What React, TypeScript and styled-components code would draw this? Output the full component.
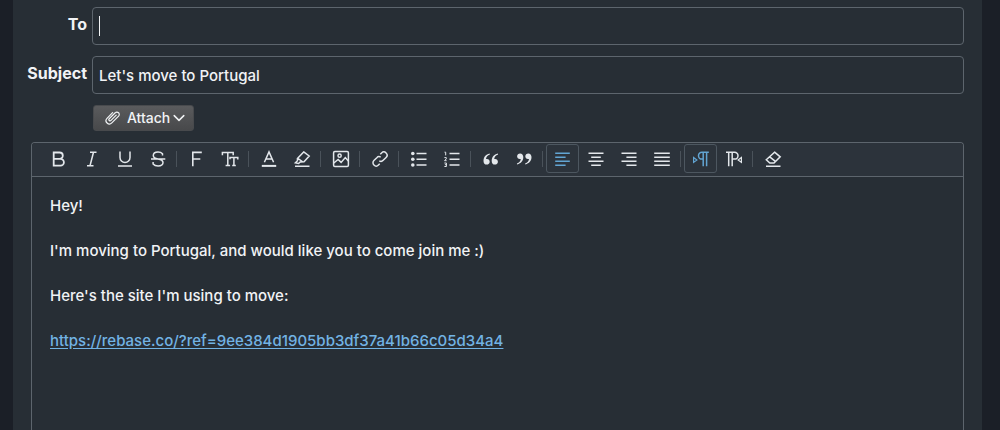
import React from "react";
import styled, { createGlobalStyle } from "styled-components";

const Global = createGlobalStyle`
  * { box-sizing: border-box; }
  html, body, #root { height: 100%; }
  body {
    margin: 0;
    background: #1b1f27;
    font-family: Inter, "Liberation Sans", sans-serif;
    font-size: 15px;
    font-weight: 500;
    color: #f1f3f5;
    overflow: hidden;
  }
`;

const Panel = styled.form`
  display: flex;
  flex-direction: column;
  min-height: 100%;
  margin: 0 18px 0 13px;
  padding: 7px 18px 0 14px;
  background: #272e35;
`;

const Row = styled.div`
  display: grid;
  grid-template-columns: 60px 1fr;
  column-gap: 5px;
  margin-bottom: 11px;
`;

const Label = styled.label`
  justify-self: end;
  padding-top: 8px;
  font-size: 16px;
  line-height: 18px;
  font-weight: 700;
`;

const Field = styled.div`
  display: flex;
  align-items: center;
  height: 38px;
  padding: 0 6px;
  border: 1px solid #5d656d;
  border-radius: 4px;
`;

const Caret = styled.span`
  width: 1px;
  height: 20px;
  background: #f1f3f5;
`;

const Input = styled.input`
  flex: 1;
  min-width: 0;
  padding: 0;
  border: 0;
  outline: 0;
  background: transparent;
  color: inherit;
  font: inherit;
  caret-color: transparent;
`;

const AttachButton = styled.button`
  display: flex;
  align-items: center;
  align-self: flex-start;
  height: 26px;
  margin: 0 0 11px 66px;
  padding: 0 8px 0 11px;
  border: 1px solid #484a4d;
  border-radius: 3px;
  background: linear-gradient(#5a5b5d, #48494b);
  color: #f1f3f5;
  font: 500 14px/18px Inter, "Liberation Sans", sans-serif;

  span { margin: 0 3px 0 6px; }
`;

const Editor = styled.section`
  flex: 1;
  margin-left: 4px;
  border: 1px solid #5d656d;
  border-bottom: 0;
  border-radius: 4px 4px 0 0;
`;

const Toolbar = styled.div`
  display: flex;
  align-items: center;
  height: 34px;
  padding: 0 0 2px 10px;
  border-bottom: 1px solid #5d656d;
  border-radius: 3px 3px 0 0;
  background: #2c333b;
`;

const Tool = styled.button<{ $active?: boolean }>`
  display: flex;
  align-items: center;
  justify-content: center;
  flex: none;
  width: 33px;
  height: 29px;
  padding: 0;
  border: 1px solid ${(p) => (p.$active ? "#4d5760" : "transparent")};
  border-radius: 3px;
  background: transparent;
  color: ${(p) => (p.$active ? "#62a5d3" : "#e3e7eb")};
`;

const Divider = styled.span`
  flex: none;
  width: 1px;
  height: 16px;
  margin: 0 3px 0 2px;
  background: #4a525a;
`;

const Body = styled.div`
  padding: 17px 18px;
  outline: 0;
`;

const Paragraph = styled.p`
  margin: 0 0 22px;
  line-height: 23px;
`;

const Link = styled.a`
  color: #72b3e4;
  text-underline-offset: 2px;
`;

const Glyph = styled.svg`
  display: block;
  width: 18px;
  height: 18px;
  fill: none;
  stroke: currentColor;
  stroke-width: 1.5;
`;

const solid = { fill: "currentColor", stroke: "none" };

const quoteMark = (
  <path
    {...solid}
    d="M7.6 3.6C3.8 4.4 1.5 7 1.5 10.9c0 2.3 1.3 3.7 3.2 3.7 1.7 0 3-1.2 3-2.9 0-1.6-1.1-2.8-2.7-2.8-.4 0-.8.1-1 .2.3-2.1 1.5-3.7 3.9-4.5zM15.8 3.6C12 4.4 9.7 7 9.7 10.9c0 2.3 1.3 3.7 3.2 3.7 1.7 0 3-1.2 3-2.9 0-1.6-1.1-2.8-2.7-2.8-.4 0-.8.1-1 .2.3-2.1 1.5-3.7 3.9-4.5z"
  />
);

const icons: Record<string, React.ReactNode> = {
  Bold: <path strokeWidth="1.8" d="M3.7 2.5h5.9a3.2 3.2 0 0 1 0 6.4H3.7zM3.7 8.9h6.8a3.4 3.4 0 0 1 0 6.8H3.7z" />,
  Italic: <path d="M7 2.2h6.5M4 15.8h6.5M10.5 2.2 7 15.8" />,
  Underline: <path d="M4 1.5v6a5 5 0 0 0 10 0v-6M2 15.9h14" />,
  Strikethrough: <path d="M13.5 5.5V3.7C12.6 2.7 11 2 9 2 6.2 2 4.3 3.4 4.3 5.5c0 1.8 1.2 2.8 4.7 3.5 3.6.7 5 1.6 5 3.5 0 2-1.9 3.4-4.9 3.4-2.2 0-4-.8-5-2v-2M2 9.1h14.3" />,
  Font: <path strokeWidth="1.6" d="M4.8 16.3V2.4h9M4.8 9h7.5" />,
  "Font size": <path d="M1.4 5.2V2.4h10.8v2.8M6.8 2.4v13M4.6 15.5h4.5M9 9.2V7.4h7.8v2.2M12.9 7.4v8.1M11.2 15.5h3.6" />,
  "Text color": (
    <>
      <path d="M4.4 12.3 9 1.9l4.6 10.4M6 9h6" />
      <path strokeWidth="2" d="M1.8 15.9h14.4" />
    </>
  ),
  Highlight: <path d="M10.7 1.9 16.2 6 11 11.8 7.2 12 5.6 13.5 2.4 12.8 4.5 10.8 4.4 8.6zM4.8 8.4 10 12M2 16.2h14.5" />,
  Image: (
    <>
      <rect x="1.6" y="1.6" width="14.8" height="14.8" rx="1.2" />
      <circle cx="7.6" cy="5.7" r="1.6" />
      <path d="m1.8 13 4.3-3.6 3 3 4.2-4.8 3 3.4" />
    </>
  ),
  Link: (
    <g transform="rotate(-45 9 9)">
      <path d="M10.8 8.2A3.1 3.1 0 0 0 7.7 5.8H3.6a3.2 3.2 0 0 0 0 6.4h1.8M7.2 9.8a3.1 3.1 0 0 0 3.1 2.4h4.1a3.2 3.2 0 0 0 0-6.4h-1.8" />
    </g>
  ),
  "Bulleted list": (
    <>
      <path strokeWidth="1.6" d="M6.5 3.5h10M6.5 9.2h10M6.5 15h10" />
      <g {...solid}>
        <circle cx="2.8" cy="3.5" r="1.8" />
        <circle cx="2.8" cy="9.2" r="1.8" />
        <circle cx="2.8" cy="15" r="1.8" />
      </g>
    </>
  ),
  "Numbered list": (
    <>
      <path strokeWidth="1.6" d="M6.5 3.5h10M6.5 9.2h10M6.5 15h10" />
      <path strokeWidth="1" d="M1.5 2.2h1.2v3.2M1.4 7.6h1.9v1.2L1.6 10.7h2M1.4 13h2v3.5h-2M1.9 14.7h1.5" />
    </>
  ),
  "Open quote": quoteMark,
  "Close quote": <g transform="rotate(180 9 9)">{quoteMark}</g>,
  "Align left": <path strokeWidth="1.6" d="M1.2 3.2h14.6M1.2 7.2h10.4M1.2 11.2h14.6M1.2 15.2h10.4" />,
  "Align center": <path strokeWidth="1.6" d="M1.5 3.2h15M4.2 7.2h9.6M1.5 11.2h15M4.2 15.2h9.6" />,
  "Align right": <path strokeWidth="1.6" d="M1.5 3.2h15M6.4 7.2h10.1M1.5 11.2h15M6.4 15.2h10.1" />,
  Justify: <path strokeWidth="1.6" d="M1.2 3.2h15.6M1.2 7.2h15.6M1.2 11.2h15.6M1.2 15.2h15.6" />,
  "Left to right": (
    <>
      <path d="M16.8 2.3H9.9a3.4 3.4 0 0 0 0 6.8h1.3M11.2 2.3v14M14.6 2.3v14" />
      <path strokeWidth="1.2" d="M1.6 7.4v5l3.3-2.5z" />
    </>
  ),
  "Right to left": (
    <>
      <path d="M1 2.3h8.6a3.4 3.4 0 0 1 0 6.8H7.2M3.7 2.3v14M7.2 2.3v14" />
      <path strokeWidth="1.2" d="M16.4 7.4v5l-3.3-2.5z" />
    </>
  ),
  "Clear formatting": <path d="M10.6 2.2 16.2 6.8 10 13H5.8L2.3 9.8zM5.7 6.8l6 4.9M2 16.2h14.5" />,
};

const groups = [
  ["Bold", "Italic", "Underline", "Strikethrough"],
  ["Font", "Font size"],
  ["Text color", "Highlight"],
  ["Image"],
  ["Link"],
  ["Bulleted list", "Numbered list"],
  ["Open quote", "Close quote"],
  ["Align left", "Align center", "Align right", "Justify"],
  ["Left to right", "Right to left"],
  ["Clear formatting"],
];

const active = ["Align left", "Left to right"];

export default function App() {
  return (
    <>
      <Global />
      <Panel>
        <Row>
          <Label htmlFor="to">To</Label>
          <Field>
            <Caret />
            <Input id="to" type="text" />
          </Field>
        </Row>
        <Row>
          <Label htmlFor="subject">Subject</Label>
          <Field>
            <Input id="subject" type="text" defaultValue="Let's move to Portugal" />
          </Field>
        </Row>
        <AttachButton type="button">
          <svg width="16" height="16" viewBox="0 0 16 16" fill="none" stroke="currentColor" strokeWidth="1.2" strokeLinecap="round">
            <path d="M11.2 5.2 6 10.4a1.2 1.2 0 0 1-1.8-1.7l6-5.9a2.3 2.3 0 0 1 3.4 3.3l-6.8 6.8a3.3 3.3 0 0 1-4.8-4.6l5.6-5.6" />
          </svg>
          <span>Attach</span>
          <svg width="12" height="12" viewBox="0 0 12 12" fill="none" stroke="currentColor" strokeWidth="1.5" strokeLinecap="round" strokeLinejoin="round">
            <path d="m1.2 3.6 4.8 4.8 4.8-4.8" />
          </svg>
        </AttachButton>
        <Editor>
          <Toolbar role="toolbar" aria-label="Formatting">
            {groups.map((group, i) => (
              <React.Fragment key={group[0]}>
                {i > 0 && <Divider />}
                {group.map((name) => (
                  <Tool key={name} type="button" aria-label={name} $active={active.includes(name)}>
                    <Glyph viewBox="0 0 18 18">{icons[name]}</Glyph>
                  </Tool>
                ))}
              </React.Fragment>
            ))}
          </Toolbar>
          <Body>
            <Paragraph>Hey!</Paragraph>
            <Paragraph>I'm moving to Portugal, and would like you to come join me :)</Paragraph>
            <Paragraph>Here's the site I'm using to move:</Paragraph>
            <Paragraph>
              <Link href="https://rebase.co/?ref=9ee384d1905bb3df37a41b66c05d34a4">
                https://rebase.co/?ref=9ee384d1905bb3df37a41b66c05d34a4
              </Link>
            </Paragraph>
          </Body>
        </Editor>
      </Panel>
    </>
  );
}
